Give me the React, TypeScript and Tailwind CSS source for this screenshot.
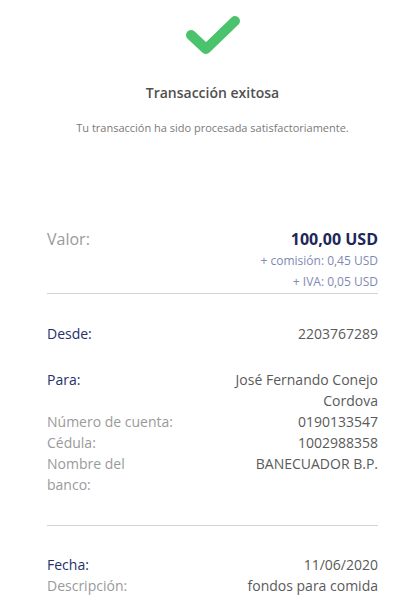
export default function App() {
  const row = 'flex justify-between text-[14px] leading-[21px]'
  return (
    <div className="min-h-[612px] bg-white pl-[47px] pr-[29px] pt-[12px] font-['Open_Sans',sans-serif] text-[#5a5a5a]">
      <div className="flex flex-col items-center">
        <svg width="60" height="48" viewBox="0 0 60 48">
          <path d="M8 23 L23 37 L52 9" fill="none" stroke="#4bc26c" strokeWidth="10" strokeLinecap="round" strokeLinejoin="round" />
        </svg>
        <div className="mt-[22px] text-[14px] font-semibold text-[#505050]">Transacción exitosa</div>
        <div className="mt-[17px] text-[11px] text-[#7a7a7a]">Tu transacción ha sido procesada satisfactoriamente.</div>
      </div>

      <div className="mt-[91px] border-b border-[#d4d4d4] pb-[1px]">
        <div className="flex items-center justify-between leading-[22px]">
          <span className="text-[16px] text-[#9a9a9a]">Valor:</span>
          <span className="text-[16px] font-bold text-[#1e2759]">100,00 USD</span>
        </div>
        <div className="text-right text-[12px] leading-[21px] text-[#8189b3]">+ comisión: 0,45 USD</div>
        <div className="text-right text-[12px] leading-[21px] text-[#8189b3]">+ IVA: 0,05 USD</div>
      </div>

      <div className="mt-[29px] border-b border-[#d4d4d4] pb-[30px]">
        <div className={row}>
          <span className="text-[#26306a]">Desde:</span>
          <span>2203767289</span>
        </div>
        <div className={`${row} mt-[25px]`}>
          <span className="text-[#26306a]">Para:</span>
          <span className="text-right">José Fernando Conejo<br />Cordova</span>
        </div>
        <div className={row}>
          <span className="text-[#9a9a9a]">Número de cuenta:</span>
          <span>0190133547</span>
        </div>
        <div className={row}>
          <span className="text-[#9a9a9a]">Cédula:</span>
          <span>1002988358</span>
        </div>
        <div className={row}>
          <span className="w-[100px] text-[#9a9a9a]">Nombre del banco:</span>
          <span>BANECUADOR B.P.</span>
        </div>
      </div>

      <div className="mt-[28px]">
        <div className={row}>
          <span className="text-[#26306a]">Fecha:</span>
          <span>11/06/2020</span>
        </div>
        <div className={row}>
          <span className="text-[#9a9a9a]">Descripción:</span>
          <span>fondos para comida</span>
        </div>
      </div>
    </div>
  )
}
